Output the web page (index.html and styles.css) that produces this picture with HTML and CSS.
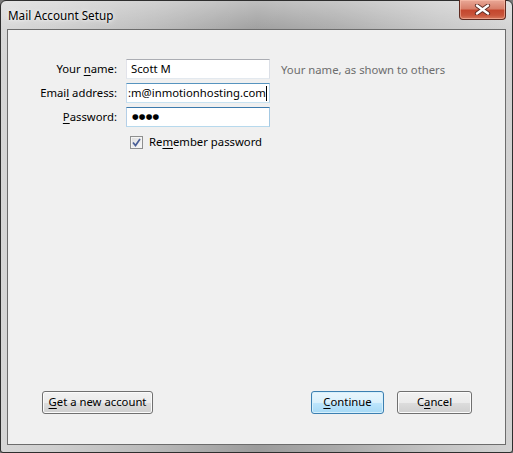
FILE: index.html
```html
<!DOCTYPE html>
<html>
<head>
<meta charset="utf-8">
<title>Mail Account Setup</title>
<link rel="stylesheet" href="styles.css">
</head>
<body>
<div class="window">
  <div class="titlebar">
    <span class="title">Mail Account Setup</span>
    <div class="close">
      <svg width="17" height="11" viewBox="0 0 17 11">
        <path d="M3 1.5 L14 9.5 M14 1.5 L3 9.5" stroke="#5a2a22" stroke-width="4.2" stroke-linecap="round"/>
        <path d="M3 1.5 L14 9.5 M14 1.5 L3 9.5" stroke="#ffffff" stroke-width="2.4" stroke-linecap="round"/>
      </svg>
    </div>
  </div>
  <div class="client">
    <div class="form">
      <div class="label">Your <u>n</u>ame:</div>
      <div class="input">Scott M</div>
      <div class="hint">Your name, as shown to others</div>

      <div class="label">Emai<u>l</u> address:</div>
      <div class="input input-active"><span class="clip">:m@inmotionhosting.com</span><span class="caret"></span></div>
      <div></div>

      <div class="label"><u>P</u>assword:</div>
      <div class="input input-hover"><span class="dots">●●●●</span></div>
      <div></div>
    </div>
    <div class="check-row">
      <span class="checkbox">
        <svg width="9" height="9" viewBox="0 0 9 9"><path d="M1 4.5 L3.5 7.5 L8 1" fill="none" stroke="#4a5f97" stroke-width="1.7"/></svg>
      </span>
      <span class="check-label">Re<u>m</u>ember password</span>
    </div>
    <div class="buttons">
      <div class="btn btn-wide"><u>G</u>et a new account</div>
      <div class="spacer"></div>
      <div class="btn btn-default"><u>C</u>ontinue</div>
      <div class="btn btn-cancel">C<u>a</u>ncel</div>
    </div>
  </div>
</div>
</body>
</html>
```

FILE: styles.css
```css
* { box-sizing: border-box; }
html, body { margin: 0; padding: 0; }
body {
  width: 513px;
  height: 453px;
  overflow: hidden;
  font-family: "Noto Sans", "Open Sans", sans-serif;
  font-size: 11.3px;
  color: #000;
  background: #7a7a7a;
}
u { text-decoration: underline; text-underline-offset: 2px; }

.window {
  width: 513px;
  height: 453px;
  border: 1px solid #2e2e2e;
  border-radius: 6px 6px 3px 3px;
  padding: 0 6px 7px 6px;
  display: flex;
  flex-direction: column;
  background:
    linear-gradient(to bottom, rgba(255,255,255,0.35) 0px, rgba(255,255,255,0.05) 28px, rgba(255,255,255,0) 60px),
    linear-gradient(to right, #d6d6d6 0%, #cfcfcf 10%, #b9b9b9 30%, #9c9c9c 50%, #a9a9a9 65%, #c4c4c4 85%, #d2d2d2 100%);
}

.titlebar {
  height: 28px;
  display: flex;
  justify-content: space-between;
  align-items: flex-start;
  padding-left: 1px;
}
.title {
  padding-top: 6px;
  line-height: 16px;
  font-size: 11.7px;
  color: #000;
  text-shadow: 0 0 6px rgba(255,255,255,0.9), 0 0 3px rgba(255,255,255,0.8);
}
.close {
  width: 47px;
  height: 20px;
  margin-top: -1px;
  border: 1px solid #5e2a20;
  border-top: none;
  border-radius: 0 0 4px 4px;
  background: linear-gradient(to bottom, #e9a897 0%, #d8806b 45%, #c4472e 55%, #c8543a 80%, #d77a5f 100%);
  box-shadow: inset 0 0 0 1px rgba(255,200,180,0.5);
  display: flex;
  align-items: center;
  justify-content: center;
}

.client {
  flex: 1;
  border: 1px solid #6c6c6c;
  background: #f0f0f0;
  display: flex;
  flex-direction: column;
  padding-top: 29px;
}

.form {
  display: grid;
  grid-template-columns: 109px 144px auto;
  column-gap: 9px;
  row-gap: 4px;
  align-items: center;
}
.form .hint { margin-left: 2px; }
.label {
  text-align: right;
  line-height: 20px;
}
.input {
  height: 20px;
  border: 1px solid #abadb3;
  border-left-color: #e2e3ea;
  border-right-color: #dbdfe6;
  border-bottom-color: #e3e9ef;
  background: #fff;
  padding: 0 4px;
  line-height: 18px;
  white-space: nowrap;
  overflow: hidden;
  display: flex;
  align-items: center;
}
.input-active { padding-left: 1px; border-color: #5794bf #b7d5ea #c7e2f1 #c5daed; }
.input-hover { border-color: #3d7bad #a4c9e3 #b7d9ed #b5cfe7; padding-left: 5px; }
.clip { flex: 1; }
.caret { width: 1px; height: 15px; background: #000; flex: none; }
.dots { font-size: 7.6px; letter-spacing: 0.2px; font-family: "DejaVu Sans", sans-serif; }
.hint { color: #6d6d6d; white-space: nowrap; }

.check-row {
  display: flex;
  align-items: center;
  margin-top: 7px;
  padding-left: 122px;
  gap: 6px;
  line-height: 16px;
}
.checkbox {
  width: 13px;
  height: 13px;
  border: 1px solid #8e8f8f;
  background: linear-gradient(135deg, #dcdcdc, #fafafa);
  box-shadow: inset 0 0 0 1px #f4f4f4;
  display: flex;
  align-items: center;
  justify-content: center;
}

.buttons {
  margin-top: auto;
  display: flex;
  align-items: center;
  padding: 0 33px 30px 34px;
  gap: 13px;
}
.spacer { flex: 1; }
.btn {
  height: 23px;
  border: 1px solid #707070;
  border-radius: 3px;
  box-shadow: inset 0 0 0 1px #fbfbfb;
  background: linear-gradient(to bottom, #f2f2f2 0%, #ebebeb 50%, #dddddd 50%, #cfcfcf 100%);
  display: flex;
  align-items: center;
  justify-content: center;
  line-height: 16px;
  padding-bottom: 1px;
}
.btn-wide { width: 111px; }
.btn-default {
  width: 73px;
  border-color: #3c7fb1;
  box-shadow: inset 0 0 0 1px #d6f0fc;
  background: linear-gradient(to bottom, #eaf6fd 0%, #d9f0fc 50%, #bee6fd 50%, #a7d9f5 100%);
}
.btn-cancel { width: 75px; }
```
